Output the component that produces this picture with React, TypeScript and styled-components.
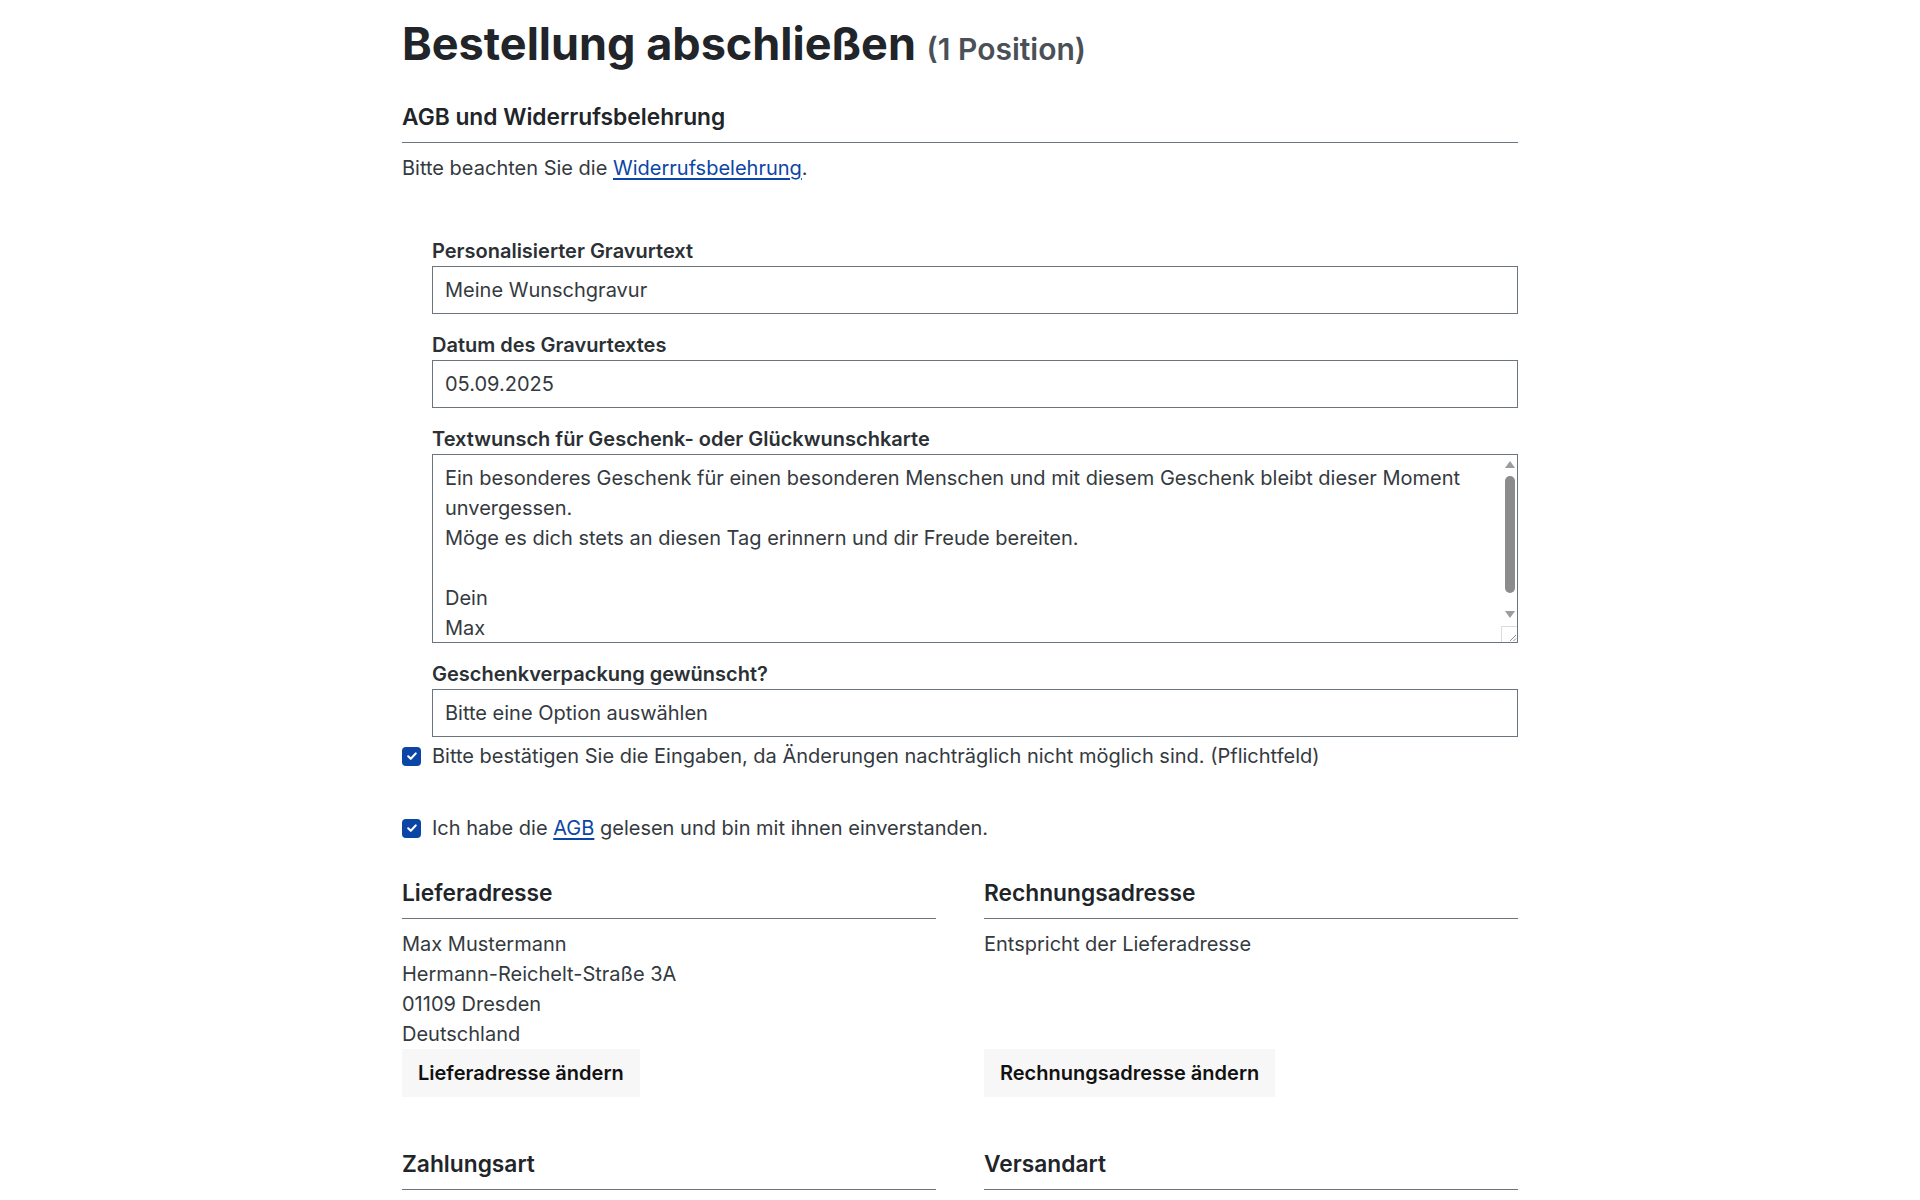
import React from "react";
import styled, { createGlobalStyle } from "styled-components";

const GlobalStyle = createGlobalStyle`
  html, body {
    margin: 0;
    padding: 0;
    background: #ffffff;
    overflow: hidden;
  }
  body {
    font-family: Inter, "Noto Sans", "Liberation Sans", sans-serif;
    font-size: 20px;
    line-height: 30px;
    color: #343a40;
  }
  * {
    box-sizing: border-box;
  }
`;

const Page = styled.main`
  max-width: 1140px;
  margin: 0 auto;
  padding: 18px 12px 0;
`;

const Title = styled.h1`
  margin: 0;
  font-size: 45px;
  line-height: 52px;
  font-weight: 700;
  color: #212529;
`;

const Count = styled.span`
  font-size: 30px;
  font-weight: 600;
  color: #495057;
`;

const Section = styled.section<{ $top?: number }>`
  margin-top: ${(p) => p.$top ?? 0}px;
`;

const SectionHeading = styled.h2`
  margin: 0;
  padding-bottom: 10px;
  border-bottom: 1px solid #6c757d;
  font-size: 22.75px;
  line-height: 30px;
  font-weight: 600;
  color: #212529;
`;

const Text = styled.p`
  margin: 10px 0 0;
`;

const Link = styled.a`
  color: #0b46a6;
  text-decoration: underline;
  text-underline-offset: 3px;
`;

const Form = styled.form`
  margin-top: 53px;
  padding-left: 30px;
`;

const Field = styled.div`
  display: flex;
  flex-direction: column;
  & + & {
    margin-top: 16px;
  }
`;

const Label = styled.label`
  font-weight: 600;
  color: #2b3035;
`;

const controlBase = `
  display: block;
  width: 100%;
  margin: 0;
  border: 1px solid #6c757d;
  border-radius: 0;
  background: #ffffff;
  padding: 8px 12px;
  font-family: Inter, "Noto Sans", "Liberation Sans", sans-serif;
  font-size: 20px;
  line-height: 30px;
  color: #343a40;
  outline: none;
`;

const Input = styled.input`
  ${controlBase}
  height: 48px;
`;

const TextAreaWrap = styled.div`
  position: relative;
`;

const TextArea = styled.textarea`
  ${controlBase}
  height: 189px;
  padding-right: 27px;
  resize: none;
  scrollbar-width: none;
  &::-webkit-scrollbar {
    display: none;
  }
`;

/* drawn scrollbar laid over the textarea's right edge */
const ScrollTrack = styled.div`
  position: absolute;
  top: 2px;
  right: 1px;
  bottom: 20px;
  width: 15px;
  display: flex;
  flex-direction: column;
  align-items: center;
  pointer-events: none;
`;

const Arrow = styled.span<{ $down?: boolean }>`
  flex: none;
  height: 17px;
  display: flex;
  align-items: center;
  justify-content: center;
  &::before {
    content: "";
    width: 0;
    height: 0;
    border-left: 5.5px solid transparent;
    border-right: 5.5px solid transparent;
    ${(p) => (p.$down ? "border-top: 7px solid #9c9c9c;" : "border-bottom: 7px solid #9c9c9c;")}
  }
`;

const Thumb = styled.span`
  width: 10px;
  height: 117px;
  margin-top: 3px;
  border-radius: 5px;
  background: #8c8c8c;
`;

const Spacer = styled.span`
  flex: 1;
`;

const ResizeCorner = styled.div`
  position: absolute;
  right: 1px;
  bottom: 1px;
  width: 16px;
  height: 16px;
  border-left: 1px solid #dcdcdc;
  border-top: 1px solid #dcdcdc;
  background: #ffffff;
  display: flex;
  align-items: flex-end;
  justify-content: flex-end;
  pointer-events: none;
`;

const Select = styled.select`
  ${controlBase}
  height: 48px;
  appearance: none;
  -webkit-appearance: none;
`;

const CheckRow = styled.label<{ $top: number; $inset?: boolean }>`
  display: flex;
  align-items: center;
  gap: 11px;
  margin-top: ${(p) => p.$top}px;
  margin-left: ${(p) => (p.$inset ? -30 : 0)}px;
  cursor: pointer;
`;

const HiddenInput = styled.input`
  position: absolute;
  opacity: 0;
  width: 0;
  height: 0;
`;

const Box = styled.span`
  flex: none;
  width: 19px;
  height: 19px;
  border-radius: 4px;
  background: #0b46a6;
  display: inline-flex;
  align-items: center;
  justify-content: center;
`;

const Grid = styled.div`
  display: grid;
  grid-template-columns: 1fr 1fr;
  column-gap: 48px;
  row-gap: 52px;
  margin-top: 35px;
`;

const Column = styled.div`
  display: flex;
  flex-direction: column;
`;

const Address = styled.div`
  margin-top: 10px;
  flex: 1;
`;

const ActionButton = styled.button`
  align-self: flex-start;
  height: 48px;
  padding: 0 16px;
  border: none;
  border-radius: 0;
  background: #f7f7f7;
  font-family: Inter, "Noto Sans", "Liberation Sans", sans-serif;
  font-size: 20px;
  font-weight: 600;
  color: #111111;
  cursor: pointer;
`;

function Check({ children, top, inset }: { children: React.ReactNode; top: number; inset?: boolean }) {
  return (
    <CheckRow $top={top} $inset={inset}>
      <HiddenInput type="checkbox" defaultChecked />
      <Box>
        <svg width="12" height="12" viewBox="0 0 12 12" fill="none">
          <path d="M2.2 6.3 4.8 8.8 9.8 3.4" stroke="#fff" strokeWidth="2.1" strokeLinecap="round" strokeLinejoin="round" />
        </svg>
      </Box>
      <span>{children}</span>
    </CheckRow>
  );
}

const cardText =
  "Ein besonderes Geschenk für einen besonderen Menschen und mit diesem Geschenk bleibt dieser Moment unvergessen.\nMöge es dich stets an diesen Tag erinnern und dir Freude bereiten.\n\nDein\nMax";

function App() {
  return (
    <>
      <GlobalStyle />
      <Page>
        <Title>
          Bestellung abschließen <Count>(1 Position)</Count>
        </Title>

        <Section $top={27}>
          <SectionHeading>AGB und Widerrufsbelehrung</SectionHeading>
          <Text>
            Bitte beachten Sie die <Link href="#">Widerrufsbelehrung</Link>.
          </Text>
        </Section>

        <Form onSubmit={(e) => e.preventDefault()}>
          <Field>
            <Label htmlFor="gravur">Personalisierter Gravurtext</Label>
            <Input id="gravur" defaultValue="Meine Wunschgravur" />
          </Field>
          <Field>
            <Label htmlFor="datum">Datum des Gravurtextes</Label>
            <Input id="datum" defaultValue="05.09.2025" />
          </Field>
          <Field>
            <Label htmlFor="karte">Textwunsch für Geschenk- oder Glückwunschkarte</Label>
            <TextAreaWrap>
              <TextArea id="karte" defaultValue={cardText} />
              <ScrollTrack>
                <Arrow />
                <Thumb />
                <Spacer />
                <Arrow $down />
              </ScrollTrack>
              <ResizeCorner>
                <svg width="10" height="10" viewBox="0 0 10 10">
                  <path d="M9 3 3 9M9 6.5 6.5 9" stroke="#8a8a8a" strokeWidth="1" />
                </svg>
              </ResizeCorner>
            </TextAreaWrap>
          </Field>
          <Field>
            <Label htmlFor="verpackung">Geschenkverpackung gewünscht?</Label>
            <Select id="verpackung" defaultValue="">
              <option value="">Bitte eine Option auswählen</option>
              <option value="ja">Ja</option>
              <option value="nein">Nein</option>
            </Select>
          </Field>
          <Check top={4} inset>
            Bitte bestätigen Sie die Eingaben, da Änderungen nachträglich nicht möglich sind. (Pflichtfeld)
          </Check>
        </Form>

        <Check top={42}>
          Ich habe die <Link href="#">AGB</Link> gelesen und bin mit ihnen einverstanden.
        </Check>

        <Grid>
          <Column>
            <SectionHeading>Lieferadresse</SectionHeading>
            <Address>
              Max Mustermann
              <br />
              Hermann-Reichelt-Straße 3A
              <br />
              01109 Dresden
              <br />
              Deutschland
            </Address>
            <ActionButton type="button">Lieferadresse ändern</ActionButton>
          </Column>
          <Column>
            <SectionHeading>Rechnungsadresse</SectionHeading>
            <Address>Entspricht der Lieferadresse</Address>
            <ActionButton type="button">Rechnungsadresse ändern</ActionButton>
          </Column>
          <Column>
            <SectionHeading>Zahlungsart</SectionHeading>
          </Column>
          <Column>
            <SectionHeading>Versandart</SectionHeading>
          </Column>
        </Grid>
      </Page>
    </>
  );
}

export default App;
